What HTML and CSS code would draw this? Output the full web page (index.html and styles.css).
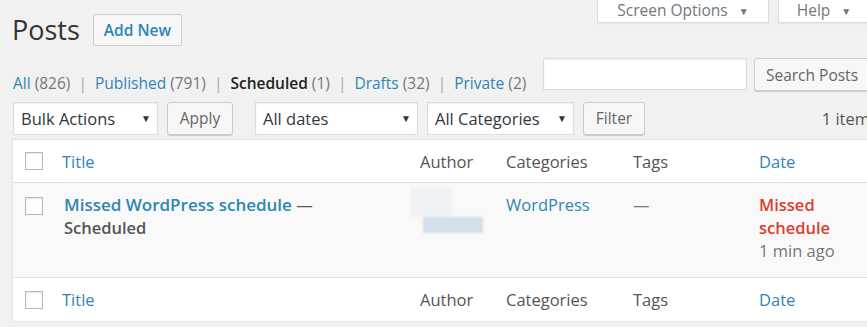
FILE: index.html
```html
<!DOCTYPE html>
<html lang="en">
<head>
    <meta charset="UTF-8">
    <meta name="viewport" content="width=device-width, initial-scale=1.0">
    <title>Posts</title>
    <link rel="stylesheet" href="styles.css">
</head>
<body>
    <div class="wrap">
        <div class="top">
            <div class="heading">
                <h1>Posts</h1>
                <a class="add-new" href="#">Add New</a>
            </div>
            <div class="meta-links">
                <div class="meta-tab tab-options">Screen Options <span class="arrow">&#9660;</span></div>
                <div class="meta-tab tab-help">Help <span class="arrow">&#9660;</span></div>
            </div>
        </div>

        <div class="filters">
            <ul class="subsubsub">
                <li><a href="#">All</a> <span class="count">(826)</span></li>
                <li class="sep">|</li>
                <li><a href="#">Published</a> <span class="count">(791)</span></li>
                <li class="sep">|</li>
                <li><a class="current" href="#">Scheduled</a> <span class="count">(1)</span></li>
                <li class="sep">|</li>
                <li><a href="#">Drafts</a> <span class="count">(32)</span></li>
                <li class="sep">|</li>
                <li><a href="#">Private</a> <span class="count">(2)</span></li>
            </ul>
            <div class="search-box">
                <input type="text" class="search-input">
                <button class="btn btn-search">Search Posts</button>
            </div>
        </div>

        <div class="tablenav">
            <div class="actions">
                <div class="select sel-bulk">Bulk Actions <span class="arrow">&#9660;</span></div>
                <button class="btn btn-apply">Apply</button>
            </div>
            <div class="actions">
                <div class="select sel-dates">All dates <span class="arrow">&#9660;</span></div>
                <div class="select sel-cats">All Categories <span class="arrow">&#9660;</span></div>
                <button class="btn btn-filter">Filter</button>
            </div>
            <div class="pages">1 item</div>
        </div>

        <div class="posts-table">
            <div class="row head">
                <div class="cell cb"><span class="checkbox"></span></div>
                <div class="cell"><a href="#">Title</a></div>
                <div class="cell">Author</div>
                <div class="cell">Categories</div>
                <div class="cell">Tags</div>
                <div class="cell"><a href="#">Date</a></div>
            </div>
            <div class="row post">
                <div class="cell cb"><span class="checkbox"></span></div>
                <div class="cell title-cell">
                    <a class="row-title" href="#">Missed WordPress schedule</a> <span class="dash">&mdash;</span>
                    <div class="post-state">Scheduled</div>
                </div>
                <div class="cell">
                    <div class="avatar">
                        <div class="blur-a"></div>
                        <div class="blur-b"></div>
                    </div>
                </div>
                <div class="cell"><a href="#">WordPress</a></div>
                <div class="cell muted">&mdash;</div>
                <div class="cell">
                    <div class="missed">Missed<br>schedule</div>
                    <div class="ago">1 min ago</div>
                </div>
            </div>
            <div class="row foot">
                <div class="cell cb"><span class="checkbox"></span></div>
                <div class="cell"><a href="#">Title</a></div>
                <div class="cell">Author</div>
                <div class="cell">Categories</div>
                <div class="cell">Tags</div>
                <div class="cell"><a href="#">Date</a></div>
            </div>
        </div>
    </div>
</body>
</html>
```

FILE: styles.css
```css
body {
    margin: 0;
    background: #f1f1f1;
    font-family: 'Open Sans', 'Noto Sans', sans-serif;
    font-size: 16.5px;
    color: #555;
    overflow: hidden;
}
a {
    color: #2e86b5;
    text-decoration: none;
}
button {
    font-family: inherit;
}
.wrap {
    margin-left: 12px;
    width: 858px;
}
.top {
    display: flex;
    justify-content: space-between;
    align-items: flex-start;
}
.heading {
    display: flex;
    align-items: center;
    gap: 13px;
    margin-top: 14px;
}
h1 {
    margin: 0;
    font-size: 27px;
    font-weight: 400;
    line-height: 32px;
    color: #333;
}
.add-new {
    display: block;
    height: 30px;
    line-height: 30px;
    padding: 0 10px;
    border: 1px solid #ccc;
    border-radius: 2px;
    background: #f7f7f7;
    font-size: 15.5px;
    font-weight: 600;
}
.meta-links {
    display: flex;
    gap: 9px;
    margin-right: -4px;
}
.meta-tab {
    height: 22px;
    border: 1px solid #ddd;
    border-top: none;
    background: #fff;
    box-shadow: 0 1px 1px rgba(0, 0, 0, 0.04);
    color: #72777c;
    font-size: 15.5px;
    line-height: 20px;
    text-align: center;
}
.tab-options {
    width: 170px;
}
.tab-help {
    width: 94px;
    text-indent: -4px;
}
.arrow {
    font-size: 10px;
    margin-left: 7px;
    color: #72777c;
    vertical-align: 1px;
}
.filters {
    display: flex;
    justify-content: space-between;
    align-items: flex-end;
    margin-top: 12px;
    height: 33px;
}
.subsubsub {
    list-style: none;
    margin: 0 0 -2px 0;
    padding: 0 0 0 1px;
    display: flex;
    gap: 8px;
    font-size: 15.5px;
    line-height: 20px;
}
.subsubsub .count {
    color: #777;
}
.subsubsub .sep {
    color: #aaa;
}
.subsubsub .current {
    color: #222;
    font-weight: 600;
}
.search-box {
    display: flex;
    gap: 7px;
    align-self: flex-start;
}
.search-input {
    width: 204px;
    height: 32px;
    box-sizing: border-box;
    border: 1px solid #ddd;
    background: #fff;
    box-shadow: inset 0 1px 2px rgba(0, 0, 0, 0.07);
    margin: 0 0 0 -2px;
}
.btn {
    height: 33px;
    box-sizing: border-box;
    border: 1px solid #ccc;
    border-radius: 3px;
    background: #f7f7f7;
    box-shadow: 0 1px 0 #ccc;
    color: #666;
    font-size: 15.5px;
    padding: 0 10px;
}
.btn-search {
    width: 116px;
}
.tablenav {
    display: flex;
    align-items: center;
    margin-top: 10px;
    height: 34px;
}
.actions {
    display: flex;
    gap: 9px;
    margin-right: 22px;
    margin-left: 1px;
}
.actions + .actions {
    margin-left: 0;
}
.select {
    height: 33px;
    box-sizing: border-box;
    border: 1px solid #ddd;
    background: #fff;
    box-shadow: inset 0 1px 2px rgba(0, 0, 0, 0.07);
    display: flex;
    align-items: center;
    justify-content: space-between;
    padding: 0 6px 0 7px;
    color: #32373c;
}
.select .arrow {
    color: #333;
}
.sel-bulk { width: 145px; }
.btn-apply { width: 66px; }
.sel-dates { width: 163px; }
.sel-cats { width: 147px; }
.btn-filter { width: 62px; }
.pages {
    margin-left: auto;
    color: #555;
}
.posts-table {
    margin-top: 4px;
    background: #fff;
    border: 1px solid #e5e5e5;
    box-shadow: 0 1px 1px rgba(0, 0, 0, 0.04);
    width: 880px;
    box-sizing: border-box;
}
.row {
    display: grid;
    grid-template-columns: 39px 358px 86px 127px 126px 1fr;
}
.head {
    height: 42px;
    align-items: center;
    border-bottom: 1px solid #e1e1e1;
}
.foot {
    height: 43px;
    align-items: center;
    border-top: 1px solid #e1e1e1;
}
.post {
    height: 94px;
    background: #f9f9f9;
    line-height: 23px;
    align-items: start;
}
.cell {
    padding-left: 10px;
}
.post .cell {
    padding-top: 10px;
}
.cell.cb {
    padding-left: 12px;
}
.checkbox {
    display: block;
    width: 18px;
    height: 18px;
    box-sizing: border-box;
    border: 1px solid #b4b9be;
    background: #fff;
    box-shadow: inset 0 1px 2px rgba(0, 0, 0, 0.1);
}
.post .checkbox {
    margin-top: 4px;
}
.title-cell {
    padding-left: 12px !important;
}
.row-title {
    font-weight: 600;
    font-size: 17px;
}
.dash {
    color: #555;
}
.post-state {
    font-weight: 600;
    color: #555;
}
.avatar {
    margin-left: -10px;
    margin-top: -6px;
    filter: blur(1px);
}
.blur-a {
    width: 42px;
    height: 30px;
    background: #eef2f5;
}
.blur-b {
    width: 60px;
    height: 16px;
    margin-left: 13px;
    background: #d3e0ea;
}
.muted {
    color: #777;
}
.missed {
    color: #e03c2e;
    font-weight: 600;
}
.ago {
    color: #777;
}
```
